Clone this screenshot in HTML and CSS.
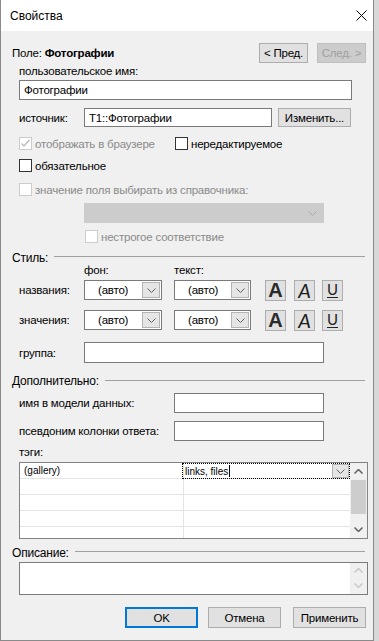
FILE: index.html
```html
<!DOCTYPE html>
<html lang="ru">
<head>
  <meta charset="UTF-8">
  <title>Свойства</title>
  <link rel="stylesheet" href="styles.css">
</head>
<body>
  <div class="dialog">
    <div class="titlebar">
      <span class="title">Свойства</span>
      <svg class="close" width="11" height="11" viewBox="0 0 11 11"><path d="M0.5 0.5 L10.5 10.5 M10.5 0.5 L0.5 10.5" stroke="#000" stroke-width="1"/></svg>
    </div>

    <div class="content">
      <div class="nav">
        <span class="field-name">Поле: <b>Фотографии</b></span>
        <button class="btn nav-btn">&lt; Пред.</button>
        <button class="btn nav-btn" disabled>След. &gt;</button>
      </div>

      <div class="label-row">пользовательское имя:</div>
      <div class="input name-input">Фотографии</div>

      <div class="form-row source-row">
        <span class="lbl">источник:</span>
        <div class="input source-input">T1::Фотографии</div>
        <button class="btn change-btn">Изменить...</button>
      </div>

      <div class="cb-row cb-first">
        <span class="cb-group">
          <span class="cb disabled"><svg width="11" height="11" viewBox="0 0 11 11"><path d="M1.5 5.5 L4 8 L9.5 2" fill="none" stroke="#b4b4b4" stroke-width="1.2"/></svg></span>
          <span class="muted">отображать в браузере</span>
        </span>
        <span class="cb"></span>
        <span>нередактируемое</span>
      </div>

      <div class="cb-row cb-second">
        <span class="cb"></span>
        <span>обязательное</span>
      </div>

      <div class="cb-row cb-third">
        <span class="cb disabled"></span>
        <span class="muted">значение поля выбирать из справочника:</span>
      </div>

      <div class="combo-disabled">
        <svg width="9" height="5" viewBox="0 0 9 5"><polyline points="0.5,0.5 4.5,4.5 8.5,0.5" fill="none" stroke="#a8a8a8"/></svg>
      </div>

      <div class="cb-row cb-loose">
        <span class="cb disabled"></span>
        <span class="muted">нестрогое соответствие</span>
      </div>

      <div class="group-head head-style"><span>Стиль:</span><span class="rule"></span></div>

      <div class="col-heads">
        <span class="col-bg">фон:</span>
        <span>текст:</span>
      </div>

      <div class="style-row row-names">
        <span class="lbl">названия:</span>
        <div class="combo combo-bg"><span>(авто)</span><span class="drop"><svg width="9" height="5" viewBox="0 0 9 5"><polyline points="0.5,0.5 4.5,4.5 8.5,0.5" fill="none" stroke="#606060"/></svg></span></div>
        <div class="combo combo-fg"><span>(авто)</span><span class="drop"><svg width="9" height="5" viewBox="0 0 9 5"><polyline points="0.5,0.5 4.5,4.5 8.5,0.5" fill="none" stroke="#606060"/></svg></span></div>
        <button class="btn fmt fmt-bold">A</button>
        <button class="btn fmt fmt-italic">A</button>
        <button class="btn fmt fmt-under"><span>U</span></button>
      </div>

      <div class="style-row row-values">
        <span class="lbl">значения:</span>
        <div class="combo combo-bg"><span>(авто)</span><span class="drop"><svg width="9" height="5" viewBox="0 0 9 5"><polyline points="0.5,0.5 4.5,4.5 8.5,0.5" fill="none" stroke="#606060"/></svg></span></div>
        <div class="combo combo-fg"><span>(авто)</span><span class="drop"><svg width="9" height="5" viewBox="0 0 9 5"><polyline points="0.5,0.5 4.5,4.5 8.5,0.5" fill="none" stroke="#606060"/></svg></span></div>
        <button class="btn fmt fmt-bold">A</button>
        <button class="btn fmt fmt-italic">A</button>
        <button class="btn fmt fmt-under"><span>U</span></button>
      </div>

      <div class="form-row group-row">
        <span class="lbl">группа:</span>
        <div class="input group-input"></div>
      </div>

      <div class="group-head head-extra"><span>Дополнительно:</span><span class="rule"></span></div>

      <div class="form-row wide-row model-row">
        <span class="lbl">имя в модели данных:</span>
        <div class="input short-input"></div>
      </div>
      <div class="form-row wide-row alias-row">
        <span class="lbl">псевдоним колонки ответа:</span>
        <div class="input short-input"></div>
      </div>

      <div class="label-row tags-label">тэги:</div>

      <div class="tags">
        <div class="tag-rows">
          <div class="tag-row">
            <span class="cell c1">(gallery)</span>
            <span class="cell c2 editing">links, files<span class="caret"></span>
              <span class="drop cell-drop"><svg width="9" height="5" viewBox="0 0 9 5"><polyline points="0.5,0.5 4.5,4.5 8.5,0.5" fill="none" stroke="#606060"/></svg></span>
            </span>
          </div>
          <div class="tag-row"><span class="cell c1"></span><span class="cell c2"></span></div>
          <div class="tag-row"><span class="cell c1"></span><span class="cell c2"></span></div>
          <div class="tag-row"><span class="cell c1"></span><span class="cell c2"></span></div>
          <div class="tag-row"><span class="cell c1"></span><span class="cell c2"></span></div>
        </div>
        <div class="vscroll">
          <span class="arrow"><svg width="9" height="5" viewBox="0 0 9 5"><polyline points="0.5,4.5 4.5,0.5 8.5,4.5" fill="none" stroke="#606060" stroke-width="1.5"/></svg></span>
          <span class="thumb"></span>
          <span class="track"></span>
          <span class="arrow"><svg width="9" height="5" viewBox="0 0 9 5"><polyline points="0.5,0.5 4.5,4.5 8.5,0.5" fill="none" stroke="#606060" stroke-width="1.5"/></svg></span>
        </div>
      </div>

      <div class="group-head head-desc"><span>Описание:</span><span class="rule"></span></div>

      <div class="memo">
        <div class="memo-text"></div>
        <div class="vscroll memo-scroll">
          <span class="arrow"><svg width="9" height="5" viewBox="0 0 9 5"><polyline points="0.5,4.5 4.5,0.5 8.5,4.5" fill="none" stroke="#c8c8c8" stroke-width="1.5"/></svg></span>
          <span class="arrow"><svg width="9" height="5" viewBox="0 0 9 5"><polyline points="0.5,0.5 4.5,4.5 8.5,0.5" fill="none" stroke="#c8c8c8" stroke-width="1.5"/></svg></span>
        </div>
      </div>

      <div class="footer">
        <button class="btn foot-btn default">OK</button>
        <button class="btn foot-btn cancel">Отмена</button>
        <button class="btn foot-btn apply">Применить</button>
      </div>
    </div>
  </div>
</body>
</html>
```

FILE: styles.css
```css
* {
  box-sizing: border-box;
}

body {
  margin: 0;
  background: #d8d8d8;
  font-family: "Liberation Sans", Arial, sans-serif;
  font-size: 11.5px;
  letter-spacing: -0.2px;
  color: #000;
}

.dialog {
  width: 374px;
  height: 641px;
  background: #f0f0f0;
  border: 1px solid #8a8a8a;
  border-top: none;
  overflow: hidden;
}

.titlebar {
  height: 31px;
  background: #fff;
  display: flex;
  align-items: center;
  justify-content: space-between;
  padding: 0 6px 0 9px;
}

.title {
  font-size: 12px;
  letter-spacing: 0;
}

.content {
  padding: 0 6px 0 10px;
}

/* generic controls */
.btn {
  font: inherit;
  letter-spacing: inherit;
  color: #000;
  background: #e1e1e1;
  border: 1px solid #adadad;
  padding: 0;
  margin: 0;
  display: flex;
  align-items: center;
  justify-content: center;
}

.btn:disabled {
  background: #cccccc;
  border-color: #bfbfbf;
  color: #a0a0a0;
}

.input {
  background: #fff;
  border: 1px solid #7a7a7a;
  padding: 0 4px;
  display: flex;
  align-items: center;
}

.lbl {
  flex: none;
  width: 65px;
}

.muted {
  color: #8a8a8a;
}

/* nav row */
.nav {
  margin-top: 12px;
  height: 20px;
  display: flex;
  align-items: center;
  padding-right: 1px;
}

.field-name {
  flex: 1;
  padding-left: 1px;
}

.nav-btn {
  width: 49px;
  height: 20px;
}

.nav-btn + .nav-btn {
  margin-left: 9px;
}

.label-row {
  margin-top: 1px;
  height: 14px;
  line-height: 14px;
  padding-left: 8px;
}

.name-input {
  margin: 2px 0 0 8px;
  width: 333px;
  height: 20px;
}

.form-row {
  display: flex;
  align-items: center;
  padding-left: 8px;
}

.source-row {
  margin-top: 8px;
  height: 19px;
}

.source-input {
  width: 188px;
  height: 19px;
}

.change-btn {
  width: 73px;
  height: 19px;
  margin-left: 6px;
}

/* checkboxes */
.cb-row {
  display: flex;
  align-items: center;
  height: 15px;
  padding-left: 8px;
}

.cb {
  flex: none;
  width: 13px;
  height: 13px;
  border: 1px solid #333;
  background: #fff;
  margin-right: 3px;
  display: flex;
  align-items: center;
  justify-content: center;
}

.cb.disabled {
  border-color: #cccccc;
}

.cb-group {
  display: flex;
  align-items: center;
  width: 156px;
}

.cb-first {
  margin-top: 9px;
}

.cb-second {
  margin-top: 7px;
}

.cb-third {
  margin-top: 9px;
}

.combo-disabled {
  margin: 6px 0 0 73px;
  width: 240px;
  height: 20px;
  background: #cccccc;
  border: 1px solid #cccccc;
  display: flex;
  align-items: center;
  justify-content: flex-end;
  padding-right: 6px;
}

.cb-loose {
  margin-top: 6px;
  padding-left: 74px;
}

/* group headings */
.group-head {
  display: flex;
  align-items: flex-start;
  height: 12px;
  line-height: 12px;
  padding: 0 2px 0 1px;
  font-size: 12px;
}

.group-head .rule {
  flex: 1;
  height: 1px;
  background: #a0a0a0;
  margin: 4px 0 0 6px;
}

.head-style {
  margin-top: 8px;
}

.head-extra {
  margin-top: 12px;
}

.head-extra .rule {
  margin-top: 5px;
}

.head-desc {
  margin-top: 8px;
}

.head-desc .rule {
  margin-top: 4px;
}

/* style rows */
.col-heads {
  height: 12px;
  line-height: 12px;
  padding-left: 73px;
  display: flex;
}

.col-bg {
  width: 90px;
}

.style-row {
  display: flex;
  align-items: center;
  height: 22px;
  padding-left: 8px;
}

.row-names {
  margin-top: 3px;
}

.row-values {
  margin-top: 8px;
}

.combo {
  height: 20px;
  background: #fff;
  border: 1px solid #7a7a7a;
  display: flex;
  align-items: center;
  justify-content: space-between;
  padding: 0 1px 0 13px;
}

.combo-bg {
  width: 78px;
}

.combo-fg {
  width: 77px;
  margin-left: 12px;
}

.drop {
  width: 18px;
  height: 16px;
  background: #e5e5e5;
  border: 1px solid #b4b4b4;
  display: flex;
  align-items: center;
  justify-content: center;
}

.fmt {
  width: 21px;
  height: 21px;
  margin-left: 8px;
  color: #2a2a2a;
  line-height: 1;
  letter-spacing: 0;
}

.fmt-bold {
  margin-left: 14px;
  font-size: 20px;
  font-weight: bold;
}

.fmt-italic {
  font-size: 20px;
  font-style: italic;
  font-family: Lato, "Liberation Sans", sans-serif;
  font-weight: 400;
  color: #1e1e1e;
}

.fmt-under {
  margin-left: 7px;
  font-size: 15px;
  font-family: Lato, "Liberation Sans", sans-serif;
  font-weight: 400;
}

.fmt-under span {
  border-bottom: 1px solid #222;
  line-height: 13px;
  padding: 0 0 1px;
  color: #222;
}

.group-row {
  margin-top: 11px;
  height: 21px;
}

.group-input {
  width: 240px;
  height: 21px;
}

.wide-row .lbl {
  width: 155px;
}

.model-row {
  margin-top: 6px;
  height: 20px;
}

.alias-row {
  margin-top: 8px;
  height: 20px;
}

.short-input {
  width: 150px;
  height: 20px;
}

.tags-label {
  margin-top: 5px;
  height: 12px;
  line-height: 12px;
}

/* tags grid */
.tags {
  margin: 4px 0 0 8px;
  width: 349px;
  height: 77px;
  border: 1px solid #828282;
  background: #fff;
  display: flex;
  font-size: 10px;
  letter-spacing: 0;
}

.tag-rows {
  flex: 1;
  overflow: hidden;
}

.tag-row {
  display: flex;
  height: 16px;
  border-bottom: 1px solid #e3e3e3;
}

.cell {
  height: 15px;
  display: flex;
  align-items: center;
}

.c1 {
  width: 164px;
  padding-left: 4px;
  border-right: 1px solid #e3e3e3;
}

.c2 {
  flex: 1;
}

.editing {
  margin-left: -2px;
  border: 1px dotted #000;
  height: 16px;
  padding-left: 2px;
}

.caret {
  width: 1px;
  height: 12px;
  background: #000;
  margin-left: 1px;
}

.cell-drop {
  margin-left: auto;
  height: 14px;
  width: 17px;
}

.vscroll {
  width: 17px;
  background: #f0f0f0;
  display: flex;
  flex-direction: column;
}

.vscroll .arrow {
  height: 17px;
  display: flex;
  align-items: center;
  justify-content: center;
}

.thumb {
  height: 34px;
  margin: 0 1px;
  background: #cdcdcd;
}

.track {
  flex: 1;
}

/* description */
.memo {
  margin: 3px 0 0 8px;
  width: 349px;
  height: 33px;
  border: 1px solid #7a7a7a;
  background: #fff;
  display: flex;
}

.memo-text {
  flex: 1;
}

.memo-scroll .arrow {
  height: 15px;
}

/* footer buttons */
.footer {
  margin-top: 12px;
  height: 21px;
  display: flex;
  justify-content: flex-end;
  padding-right: 1px;
}

.foot-btn {
  width: 73px;
  height: 21px;
}

.foot-btn.default {
  border: 2px solid #0078d7;
}

.cancel {
  margin-left: 10px;
}

.apply {
  margin-left: 12px;
}
```
